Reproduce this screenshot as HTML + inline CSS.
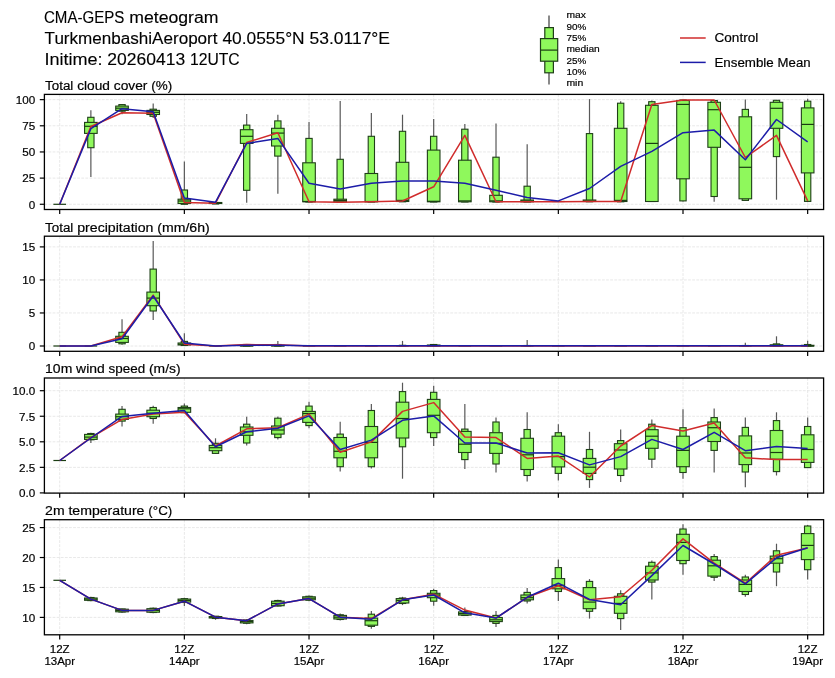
<!DOCTYPE html><html><head><meta charset="utf-8"><style>html,body{margin:0;padding:0;background:#fff;overflow:hidden}</style></head><body><svg width="835" height="678" viewBox="0 0 835 678" style="display:block;will-change:transform">
<rect width="835" height="678" fill="#fff"/>
<g font-family='"Liberation Sans", sans-serif' fill="#1a1a1a">
<text x="43.95" y="23.20" font-size="16" fill="#000" stroke="#000" stroke-width="0.12" textLength="80.45" lengthAdjust="spacingAndGlyphs">CMA-GEPS</text>
<text x="129.26" y="23.20" font-size="16" fill="#000" stroke="#000" stroke-width="0.12" textLength="89.26" lengthAdjust="spacingAndGlyphs">meteogram</text>
<text x="44.60" y="44.10" font-size="16" fill="#000" stroke="#000" stroke-width="0.12" textLength="172.95" lengthAdjust="spacingAndGlyphs">TurkmenbashiAeroport</text>
<text x="222.41" y="44.10" font-size="16" fill="#000" stroke="#000" stroke-width="0.12" textLength="82.26" lengthAdjust="spacingAndGlyphs">40.0555°N</text>
<text x="309.52" y="44.10" font-size="16" fill="#000" stroke="#000" stroke-width="0.12" textLength="80.48" lengthAdjust="spacingAndGlyphs">53.0117°E</text>
<text x="44.40" y="64.90" font-size="16" fill="#000" stroke="#000" stroke-width="0.12" textLength="58.11" lengthAdjust="spacingAndGlyphs">Initime:</text>
<text x="107.36" y="64.90" font-size="16" fill="#000" stroke="#000" stroke-width="0.12" textLength="77.77" lengthAdjust="spacingAndGlyphs">20260413</text>
<text x="189.99" y="64.90" font-size="16" fill="#000" stroke="#000" stroke-width="0.12" textLength="49.73" lengthAdjust="spacingAndGlyphs">12UTC</text>
<line x1="549" y1="15.6" x2="549" y2="84.6" stroke="#585858" stroke-width="1.4"/>
<rect x="544.8" y="27.6" width="8.6" height="45.2" fill="#8ff85c" stroke="#1f3f18" stroke-width="1.2"/>
<rect x="540.5" y="38.6" width="17.2" height="22.6" fill="#8ff85c" stroke="#1f3f18" stroke-width="1.2"/>
<line x1="540.5" y1="50.1" x2="557.7" y2="50.1" stroke="#1a3d12" stroke-width="1.2"/>
<text x="566.40" y="18.20" font-size="9.2" fill="#000" stroke="#000" stroke-width="0.18" textLength="19.41" lengthAdjust="spacingAndGlyphs">max</text>
<text x="566.40" y="29.55" font-size="9.2" fill="#000" stroke="#000" stroke-width="0.18" textLength="19.80" lengthAdjust="spacingAndGlyphs">90%</text>
<text x="566.40" y="40.90" font-size="9.2" fill="#000" stroke="#000" stroke-width="0.18" textLength="19.80" lengthAdjust="spacingAndGlyphs">75%</text>
<text x="566.40" y="52.25" font-size="9.2" fill="#000" stroke="#000" stroke-width="0.18" textLength="33.40" lengthAdjust="spacingAndGlyphs">median</text>
<text x="566.40" y="63.60" font-size="9.2" fill="#000" stroke="#000" stroke-width="0.18" textLength="19.80" lengthAdjust="spacingAndGlyphs">25%</text>
<text x="566.40" y="74.95" font-size="9.2" fill="#000" stroke="#000" stroke-width="0.18" textLength="19.80" lengthAdjust="spacingAndGlyphs">10%</text>
<text x="566.40" y="86.30" font-size="9.2" fill="#000" stroke="#000" stroke-width="0.18" textLength="16.80" lengthAdjust="spacingAndGlyphs">min</text>
<line x1="680" y1="38" x2="705.7" y2="38" stroke="#d02c2c" stroke-width="1.5"/>
<line x1="680" y1="62.4" x2="705.7" y2="62.4" stroke="#1c1ca8" stroke-width="1.5"/>
<text x="714.50" y="42.40" font-size="12.3" fill="#000" stroke="#000" stroke-width="0.18" textLength="43.74" lengthAdjust="spacingAndGlyphs">Control</text>
<text x="714.40" y="66.70" font-size="12.3" fill="#000" stroke="#000" stroke-width="0.18" textLength="59.34" lengthAdjust="spacingAndGlyphs">Ensemble</text>
<text x="777.58" y="66.70" font-size="12.3" fill="#000" stroke="#000" stroke-width="0.18" textLength="32.97" lengthAdjust="spacingAndGlyphs">Mean</text>
<line x1="44.4" y1="204.27" x2="823.6" y2="204.27" stroke="#e2e2e2" stroke-width="0.8" stroke-dasharray="2.8 1.3"/>
<line x1="44.4" y1="178.11" x2="823.6" y2="178.11" stroke="#e2e2e2" stroke-width="0.8" stroke-dasharray="2.8 1.3"/>
<line x1="44.4" y1="151.95" x2="823.6" y2="151.95" stroke="#e2e2e2" stroke-width="0.8" stroke-dasharray="2.8 1.3"/>
<line x1="44.4" y1="125.79" x2="823.6" y2="125.79" stroke="#e2e2e2" stroke-width="0.8" stroke-dasharray="2.8 1.3"/>
<line x1="44.4" y1="99.63" x2="823.6" y2="99.63" stroke="#e2e2e2" stroke-width="0.8" stroke-dasharray="2.8 1.3"/>
<line x1="59.70" y1="94.4" x2="59.70" y2="209.5" stroke="#e2e2e2" stroke-width="0.8" stroke-dasharray="2.8 1.3"/>
<line x1="184.36" y1="94.4" x2="184.36" y2="209.5" stroke="#e2e2e2" stroke-width="0.8" stroke-dasharray="2.8 1.3"/>
<line x1="309.02" y1="94.4" x2="309.02" y2="209.5" stroke="#e2e2e2" stroke-width="0.8" stroke-dasharray="2.8 1.3"/>
<line x1="433.68" y1="94.4" x2="433.68" y2="209.5" stroke="#e2e2e2" stroke-width="0.8" stroke-dasharray="2.8 1.3"/>
<line x1="558.34" y1="94.4" x2="558.34" y2="209.5" stroke="#e2e2e2" stroke-width="0.8" stroke-dasharray="2.8 1.3"/>
<line x1="683.00" y1="94.4" x2="683.00" y2="209.5" stroke="#e2e2e2" stroke-width="0.8" stroke-dasharray="2.8 1.3"/>
<line x1="807.66" y1="94.4" x2="807.66" y2="209.5" stroke="#e2e2e2" stroke-width="0.8" stroke-dasharray="2.8 1.3"/>
<line x1="59.70" y1="204.30" x2="59.70" y2="204.30" stroke="#585858" stroke-width="1.2"/>
<rect x="56.55" y="204.30" width="6.3" height="0.00" fill="#8ff85c" stroke="#1f3f18" stroke-width="1.1"/>
<rect x="53.40" y="204.30" width="12.6" height="0.00" fill="#8ff85c" stroke="#1f3f18" stroke-width="1.1"/>
<line x1="53.40" y1="204.30" x2="66.00" y2="204.30" stroke="#1a3d12" stroke-width="1.2"/>
<line x1="90.87" y1="110.20" x2="90.87" y2="177.00" stroke="#585858" stroke-width="1.2"/>
<rect x="87.72" y="117.30" width="6.3" height="30.40" fill="#8ff85c" stroke="#1f3f18" stroke-width="1.1"/>
<rect x="84.57" y="122.40" width="12.6" height="11.00" fill="#8ff85c" stroke="#1f3f18" stroke-width="1.1"/>
<line x1="84.57" y1="126.30" x2="97.17" y2="126.30" stroke="#1a3d12" stroke-width="1.2"/>
<line x1="122.03" y1="104.10" x2="122.03" y2="114.30" stroke="#585858" stroke-width="1.2"/>
<rect x="118.88" y="104.60" width="6.3" height="6.60" fill="#8ff85c" stroke="#1f3f18" stroke-width="1.1"/>
<rect x="115.73" y="106.10" width="12.6" height="4.30" fill="#8ff85c" stroke="#1f3f18" stroke-width="1.1"/>
<line x1="115.73" y1="108.20" x2="128.33" y2="108.20" stroke="#1a3d12" stroke-width="1.2"/>
<line x1="153.19" y1="103.60" x2="153.19" y2="117.90" stroke="#585858" stroke-width="1.2"/>
<rect x="150.04" y="109.20" width="6.3" height="7.10" fill="#8ff85c" stroke="#1f3f18" stroke-width="1.1"/>
<rect x="146.89" y="110.40" width="12.6" height="4.10" fill="#8ff85c" stroke="#1f3f18" stroke-width="1.1"/>
<line x1="146.89" y1="112.30" x2="159.50" y2="112.30" stroke="#1a3d12" stroke-width="1.2"/>
<line x1="184.36" y1="161.40" x2="184.36" y2="204.30" stroke="#585858" stroke-width="1.2"/>
<rect x="181.21" y="190.00" width="6.3" height="14.30" fill="#8ff85c" stroke="#1f3f18" stroke-width="1.1"/>
<rect x="178.06" y="199.20" width="12.6" height="4.30" fill="#8ff85c" stroke="#1f3f18" stroke-width="1.1"/>
<line x1="178.06" y1="201.00" x2="190.66" y2="201.00" stroke="#1a3d12" stroke-width="1.2"/>
<line x1="215.52" y1="202.00" x2="215.52" y2="204.00" stroke="#585858" stroke-width="1.2"/>
<rect x="212.37" y="202.50" width="6.3" height="1.50" fill="#8ff85c" stroke="#1f3f18" stroke-width="1.1"/>
<rect x="209.22" y="202.50" width="12.6" height="1.00" fill="#8ff85c" stroke="#1f3f18" stroke-width="1.1"/>
<line x1="209.22" y1="203.00" x2="221.82" y2="203.00" stroke="#1a3d12" stroke-width="1.2"/>
<line x1="246.69" y1="114.10" x2="246.69" y2="202.70" stroke="#585858" stroke-width="1.2"/>
<rect x="243.54" y="125.10" width="6.3" height="65.20" fill="#8ff85c" stroke="#1f3f18" stroke-width="1.1"/>
<rect x="240.39" y="129.70" width="12.6" height="13.70" fill="#8ff85c" stroke="#1f3f18" stroke-width="1.1"/>
<line x1="240.39" y1="136.30" x2="252.99" y2="136.30" stroke="#1a3d12" stroke-width="1.2"/>
<line x1="277.86" y1="114.70" x2="277.86" y2="193.80" stroke="#585858" stroke-width="1.2"/>
<rect x="274.71" y="120.90" width="6.3" height="35.20" fill="#8ff85c" stroke="#1f3f18" stroke-width="1.1"/>
<rect x="271.56" y="128.30" width="12.6" height="17.70" fill="#8ff85c" stroke="#1f3f18" stroke-width="1.1"/>
<line x1="271.56" y1="133.10" x2="284.16" y2="133.10" stroke="#1a3d12" stroke-width="1.2"/>
<line x1="309.02" y1="122.10" x2="309.02" y2="202.00" stroke="#585858" stroke-width="1.2"/>
<rect x="305.87" y="138.40" width="6.3" height="63.60" fill="#8ff85c" stroke="#1f3f18" stroke-width="1.1"/>
<rect x="302.72" y="162.80" width="12.6" height="39.00" fill="#8ff85c" stroke="#1f3f18" stroke-width="1.1"/>
<line x1="302.72" y1="201.50" x2="315.32" y2="201.50" stroke="#1a3d12" stroke-width="1.2"/>
<line x1="340.19" y1="100.90" x2="340.19" y2="202.20" stroke="#585858" stroke-width="1.2"/>
<rect x="337.04" y="159.30" width="6.3" height="42.70" fill="#8ff85c" stroke="#1f3f18" stroke-width="1.1"/>
<rect x="333.88" y="199.20" width="12.6" height="2.60" fill="#8ff85c" stroke="#1f3f18" stroke-width="1.1"/>
<line x1="333.88" y1="200.40" x2="346.49" y2="200.40" stroke="#1a3d12" stroke-width="1.2"/>
<line x1="371.35" y1="112.90" x2="371.35" y2="202.00" stroke="#585858" stroke-width="1.2"/>
<rect x="368.20" y="136.30" width="6.3" height="65.70" fill="#8ff85c" stroke="#1f3f18" stroke-width="1.1"/>
<rect x="365.05" y="173.50" width="12.6" height="28.30" fill="#8ff85c" stroke="#1f3f18" stroke-width="1.1"/>
<line x1="365.05" y1="201.50" x2="377.65" y2="201.50" stroke="#1a3d12" stroke-width="1.2"/>
<line x1="402.51" y1="114.70" x2="402.51" y2="201.80" stroke="#585858" stroke-width="1.2"/>
<rect x="399.37" y="131.30" width="6.3" height="70.50" fill="#8ff85c" stroke="#1f3f18" stroke-width="1.1"/>
<rect x="396.21" y="162.30" width="12.6" height="39.20" fill="#8ff85c" stroke="#1f3f18" stroke-width="1.1"/>
<line x1="396.21" y1="200.40" x2="408.81" y2="200.40" stroke="#1a3d12" stroke-width="1.2"/>
<line x1="433.68" y1="118.90" x2="433.68" y2="202.00" stroke="#585858" stroke-width="1.2"/>
<rect x="430.53" y="136.30" width="6.3" height="65.70" fill="#8ff85c" stroke="#1f3f18" stroke-width="1.1"/>
<rect x="427.38" y="150.10" width="12.6" height="51.70" fill="#8ff85c" stroke="#1f3f18" stroke-width="1.1"/>
<line x1="427.38" y1="201.30" x2="439.98" y2="201.30" stroke="#1a3d12" stroke-width="1.2"/>
<line x1="464.84" y1="123.90" x2="464.84" y2="202.00" stroke="#585858" stroke-width="1.2"/>
<rect x="461.69" y="129.20" width="6.3" height="72.80" fill="#8ff85c" stroke="#1f3f18" stroke-width="1.1"/>
<rect x="458.54" y="160.20" width="12.6" height="41.60" fill="#8ff85c" stroke="#1f3f18" stroke-width="1.1"/>
<line x1="458.54" y1="200.90" x2="471.14" y2="200.90" stroke="#1a3d12" stroke-width="1.2"/>
<line x1="496.01" y1="123.50" x2="496.01" y2="202.00" stroke="#585858" stroke-width="1.2"/>
<rect x="492.86" y="157.20" width="6.3" height="44.80" fill="#8ff85c" stroke="#1f3f18" stroke-width="1.1"/>
<rect x="489.71" y="195.30" width="12.6" height="6.50" fill="#8ff85c" stroke="#1f3f18" stroke-width="1.1"/>
<line x1="489.71" y1="200.90" x2="502.31" y2="200.90" stroke="#1a3d12" stroke-width="1.2"/>
<line x1="527.17" y1="144.20" x2="527.17" y2="202.00" stroke="#585858" stroke-width="1.2"/>
<rect x="524.02" y="186.20" width="6.3" height="15.80" fill="#8ff85c" stroke="#1f3f18" stroke-width="1.1"/>
<rect x="520.88" y="200.00" width="12.6" height="1.80" fill="#8ff85c" stroke="#1f3f18" stroke-width="1.1"/>
<line x1="520.88" y1="200.90" x2="533.47" y2="200.90" stroke="#1a3d12" stroke-width="1.2"/>
<line x1="558.34" y1="201.50" x2="558.34" y2="201.50" stroke="#585858" stroke-width="1.2"/>
<rect x="555.19" y="201.50" width="6.3" height="0.00" fill="#8ff85c" stroke="#1f3f18" stroke-width="1.1"/>
<rect x="552.04" y="201.50" width="12.6" height="0.00" fill="#8ff85c" stroke="#1f3f18" stroke-width="1.1"/>
<line x1="552.04" y1="201.50" x2="564.64" y2="201.50" stroke="#1a3d12" stroke-width="1.2"/>
<line x1="589.50" y1="99.10" x2="589.50" y2="201.80" stroke="#585858" stroke-width="1.2"/>
<rect x="586.36" y="133.60" width="6.3" height="68.20" fill="#8ff85c" stroke="#1f3f18" stroke-width="1.1"/>
<rect x="583.21" y="200.00" width="12.6" height="1.50" fill="#8ff85c" stroke="#1f3f18" stroke-width="1.1"/>
<line x1="583.21" y1="201.00" x2="595.80" y2="201.00" stroke="#1a3d12" stroke-width="1.2"/>
<line x1="620.67" y1="101.20" x2="620.67" y2="201.80" stroke="#585858" stroke-width="1.2"/>
<rect x="617.52" y="103.20" width="6.3" height="98.60" fill="#8ff85c" stroke="#1f3f18" stroke-width="1.1"/>
<rect x="614.37" y="128.30" width="12.6" height="73.20" fill="#8ff85c" stroke="#1f3f18" stroke-width="1.1"/>
<line x1="614.37" y1="200.40" x2="626.97" y2="200.40" stroke="#1a3d12" stroke-width="1.2"/>
<line x1="651.84" y1="100.50" x2="651.84" y2="201.50" stroke="#585858" stroke-width="1.2"/>
<rect x="648.69" y="101.70" width="6.3" height="99.80" fill="#8ff85c" stroke="#1f3f18" stroke-width="1.1"/>
<rect x="645.54" y="105.30" width="12.6" height="96.20" fill="#8ff85c" stroke="#1f3f18" stroke-width="1.1"/>
<line x1="645.54" y1="143.40" x2="658.13" y2="143.40" stroke="#1a3d12" stroke-width="1.2"/>
<line x1="683.00" y1="100.00" x2="683.00" y2="201.50" stroke="#585858" stroke-width="1.2"/>
<rect x="679.85" y="100.00" width="6.3" height="100.90" fill="#8ff85c" stroke="#1f3f18" stroke-width="1.1"/>
<rect x="676.70" y="100.50" width="12.6" height="78.30" fill="#8ff85c" stroke="#1f3f18" stroke-width="1.1"/>
<line x1="676.70" y1="104.40" x2="689.30" y2="104.40" stroke="#1a3d12" stroke-width="1.2"/>
<line x1="714.17" y1="100.00" x2="714.17" y2="201.80" stroke="#585858" stroke-width="1.2"/>
<rect x="711.02" y="100.50" width="6.3" height="96.00" fill="#8ff85c" stroke="#1f3f18" stroke-width="1.1"/>
<rect x="707.87" y="102.30" width="12.6" height="45.00" fill="#8ff85c" stroke="#1f3f18" stroke-width="1.1"/>
<line x1="707.87" y1="109.70" x2="720.47" y2="109.70" stroke="#1a3d12" stroke-width="1.2"/>
<line x1="745.33" y1="99.40" x2="745.33" y2="200.40" stroke="#585858" stroke-width="1.2"/>
<rect x="742.18" y="109.40" width="6.3" height="91.00" fill="#8ff85c" stroke="#1f3f18" stroke-width="1.1"/>
<rect x="739.03" y="116.80" width="12.6" height="82.00" fill="#8ff85c" stroke="#1f3f18" stroke-width="1.1"/>
<line x1="739.03" y1="167.30" x2="751.63" y2="167.30" stroke="#1a3d12" stroke-width="1.2"/>
<line x1="776.50" y1="100.00" x2="776.50" y2="199.70" stroke="#585858" stroke-width="1.2"/>
<rect x="773.35" y="100.30" width="6.3" height="56.30" fill="#8ff85c" stroke="#1f3f18" stroke-width="1.1"/>
<rect x="770.20" y="102.30" width="12.6" height="26.00" fill="#8ff85c" stroke="#1f3f18" stroke-width="1.1"/>
<line x1="770.20" y1="108.30" x2="782.79" y2="108.30" stroke="#1a3d12" stroke-width="1.2"/>
<line x1="807.66" y1="98.70" x2="807.66" y2="201.80" stroke="#585858" stroke-width="1.2"/>
<rect x="804.51" y="101.20" width="6.3" height="100.20" fill="#8ff85c" stroke="#1f3f18" stroke-width="1.1"/>
<rect x="801.36" y="107.90" width="12.6" height="65.00" fill="#8ff85c" stroke="#1f3f18" stroke-width="1.1"/>
<line x1="801.36" y1="124.40" x2="813.96" y2="124.40" stroke="#1a3d12" stroke-width="1.2"/>
<polyline points="59.70,204.30 90.87,126.50 122.03,112.80 153.19,113.30 184.36,202.50 215.52,203.20 246.69,142.50 277.86,132.70 309.02,201.80 340.19,202.20 371.35,201.80 402.51,201.00 433.68,186.80 464.84,135.40 496.01,201.80 527.17,201.80 558.34,201.80 589.50,201.50 620.67,201.50 651.84,104.40 683.00,100.00 714.17,100.00 745.33,157.50 776.50,135.40 807.66,200.90" fill="none" stroke="#d02c2c" stroke-width="1.5" stroke-linejoin="round"/>
<polyline points="59.70,204.30 90.87,128.60 122.03,108.70 153.19,111.70 184.36,198.00 215.52,202.20 246.69,143.40 277.86,138.40 309.02,183.20 340.19,189.10 371.35,183.20 402.51,181.10 433.68,181.10 464.84,183.20 496.01,190.30 527.17,197.40 558.34,200.90 589.50,188.50 620.67,166.40 651.84,151.30 683.00,132.70 714.17,130.10 745.33,159.70 776.50,119.50 807.66,141.90" fill="none" stroke="#1c1ca8" stroke-width="1.5" stroke-linejoin="round"/>
<rect x="44.4" y="94.4" width="779.20" height="115.1" fill="none" stroke="#000" stroke-width="1.3"/>
<line x1="39.80" y1="204.27" x2="44.4" y2="204.27" stroke="#000" stroke-width="1.2"/>
<text x="28.82" y="208.57" font-size="10.67" fill="#000" stroke="#000" stroke-width="0.18" textLength="6.48" lengthAdjust="spacingAndGlyphs">0</text>
<line x1="39.80" y1="178.11" x2="44.4" y2="178.11" stroke="#000" stroke-width="1.2"/>
<text x="22.33" y="182.41" font-size="10.67" fill="#000" stroke="#000" stroke-width="0.18" textLength="12.97" lengthAdjust="spacingAndGlyphs">25</text>
<line x1="39.80" y1="151.95" x2="44.4" y2="151.95" stroke="#000" stroke-width="1.2"/>
<text x="22.33" y="156.25" font-size="10.67" fill="#000" stroke="#000" stroke-width="0.18" textLength="12.97" lengthAdjust="spacingAndGlyphs">50</text>
<line x1="39.80" y1="125.79" x2="44.4" y2="125.79" stroke="#000" stroke-width="1.2"/>
<text x="22.33" y="130.09" font-size="10.67" fill="#000" stroke="#000" stroke-width="0.18" textLength="12.97" lengthAdjust="spacingAndGlyphs">75</text>
<line x1="39.80" y1="99.63" x2="44.4" y2="99.63" stroke="#000" stroke-width="1.2"/>
<text x="15.85" y="103.93" font-size="10.67" fill="#000" stroke="#000" stroke-width="0.18" textLength="19.45" lengthAdjust="spacingAndGlyphs">100</text>
<line x1="59.70" y1="209.5" x2="59.70" y2="214.10" stroke="#000" stroke-width="1.2"/>
<line x1="184.36" y1="209.5" x2="184.36" y2="214.10" stroke="#000" stroke-width="1.2"/>
<line x1="309.02" y1="209.5" x2="309.02" y2="214.10" stroke="#000" stroke-width="1.2"/>
<line x1="433.68" y1="209.5" x2="433.68" y2="214.10" stroke="#000" stroke-width="1.2"/>
<line x1="558.34" y1="209.5" x2="558.34" y2="214.10" stroke="#000" stroke-width="1.2"/>
<line x1="683.00" y1="209.5" x2="683.00" y2="214.10" stroke="#000" stroke-width="1.2"/>
<line x1="807.66" y1="209.5" x2="807.66" y2="214.10" stroke="#000" stroke-width="1.2"/>
<text x="45.10" y="89.80" font-size="12.3" fill="#000" stroke="#000" stroke-width="0.18" textLength="28.26" lengthAdjust="spacingAndGlyphs">Total</text>
<text x="77.21" y="89.80" font-size="12.3" fill="#000" stroke="#000" stroke-width="0.18" textLength="32.77" lengthAdjust="spacingAndGlyphs">cloud</text>
<text x="113.82" y="89.80" font-size="12.3" fill="#000" stroke="#000" stroke-width="0.18" textLength="33.64" lengthAdjust="spacingAndGlyphs">cover</text>
<text x="151.30" y="89.80" font-size="12.3" fill="#000" stroke="#000" stroke-width="0.18" textLength="20.94" lengthAdjust="spacingAndGlyphs">(%)</text>
<line x1="44.4" y1="346.00" x2="823.6" y2="346.00" stroke="#e2e2e2" stroke-width="0.8" stroke-dasharray="2.8 1.3"/>
<line x1="44.4" y1="312.96" x2="823.6" y2="312.96" stroke="#e2e2e2" stroke-width="0.8" stroke-dasharray="2.8 1.3"/>
<line x1="44.4" y1="279.93" x2="823.6" y2="279.93" stroke="#e2e2e2" stroke-width="0.8" stroke-dasharray="2.8 1.3"/>
<line x1="44.4" y1="246.89" x2="823.6" y2="246.89" stroke="#e2e2e2" stroke-width="0.8" stroke-dasharray="2.8 1.3"/>
<line x1="59.70" y1="236.2" x2="59.70" y2="351.29999999999995" stroke="#e2e2e2" stroke-width="0.8" stroke-dasharray="2.8 1.3"/>
<line x1="184.36" y1="236.2" x2="184.36" y2="351.29999999999995" stroke="#e2e2e2" stroke-width="0.8" stroke-dasharray="2.8 1.3"/>
<line x1="309.02" y1="236.2" x2="309.02" y2="351.29999999999995" stroke="#e2e2e2" stroke-width="0.8" stroke-dasharray="2.8 1.3"/>
<line x1="433.68" y1="236.2" x2="433.68" y2="351.29999999999995" stroke="#e2e2e2" stroke-width="0.8" stroke-dasharray="2.8 1.3"/>
<line x1="558.34" y1="236.2" x2="558.34" y2="351.29999999999995" stroke="#e2e2e2" stroke-width="0.8" stroke-dasharray="2.8 1.3"/>
<line x1="683.00" y1="236.2" x2="683.00" y2="351.29999999999995" stroke="#e2e2e2" stroke-width="0.8" stroke-dasharray="2.8 1.3"/>
<line x1="807.66" y1="236.2" x2="807.66" y2="351.29999999999995" stroke="#e2e2e2" stroke-width="0.8" stroke-dasharray="2.8 1.3"/>
<line x1="59.70" y1="346.00" x2="59.70" y2="346.00" stroke="#585858" stroke-width="1.2"/>
<rect x="56.55" y="346.00" width="6.3" height="0.00" fill="#8ff85c" stroke="#1f3f18" stroke-width="1.1"/>
<rect x="53.40" y="346.00" width="12.6" height="0.00" fill="#8ff85c" stroke="#1f3f18" stroke-width="1.1"/>
<line x1="53.40" y1="346.00" x2="66.00" y2="346.00" stroke="#1a3d12" stroke-width="1.2"/>
<line x1="90.87" y1="346.00" x2="90.87" y2="346.00" stroke="#585858" stroke-width="1.2"/>
<rect x="87.72" y="346.00" width="6.3" height="0.00" fill="#8ff85c" stroke="#1f3f18" stroke-width="1.1"/>
<rect x="84.57" y="346.00" width="12.6" height="0.00" fill="#8ff85c" stroke="#1f3f18" stroke-width="1.1"/>
<line x1="84.57" y1="346.00" x2="97.17" y2="346.00" stroke="#1a3d12" stroke-width="1.2"/>
<line x1="122.03" y1="319.30" x2="122.03" y2="344.70" stroke="#585858" stroke-width="1.2"/>
<rect x="118.88" y="332.30" width="6.3" height="11.50" fill="#8ff85c" stroke="#1f3f18" stroke-width="1.1"/>
<rect x="115.73" y="336.30" width="12.6" height="6.10" fill="#8ff85c" stroke="#1f3f18" stroke-width="1.1"/>
<line x1="115.73" y1="338.50" x2="128.33" y2="338.50" stroke="#1a3d12" stroke-width="1.2"/>
<line x1="153.19" y1="241.10" x2="153.19" y2="319.90" stroke="#585858" stroke-width="1.2"/>
<rect x="150.04" y="269.10" width="6.3" height="41.90" fill="#8ff85c" stroke="#1f3f18" stroke-width="1.1"/>
<rect x="146.89" y="292.10" width="12.6" height="13.60" fill="#8ff85c" stroke="#1f3f18" stroke-width="1.1"/>
<line x1="146.89" y1="298.10" x2="159.50" y2="298.10" stroke="#1a3d12" stroke-width="1.2"/>
<line x1="184.36" y1="333.30" x2="184.36" y2="345.50" stroke="#585858" stroke-width="1.2"/>
<rect x="181.21" y="341.40" width="6.3" height="4.10" fill="#8ff85c" stroke="#1f3f18" stroke-width="1.1"/>
<rect x="178.06" y="343.00" width="12.6" height="2.00" fill="#8ff85c" stroke="#1f3f18" stroke-width="1.1"/>
<line x1="178.06" y1="344.20" x2="190.66" y2="344.20" stroke="#1a3d12" stroke-width="1.2"/>
<line x1="215.52" y1="346.00" x2="215.52" y2="346.00" stroke="#585858" stroke-width="1.2"/>
<rect x="212.37" y="346.00" width="6.3" height="0.00" fill="#8ff85c" stroke="#1f3f18" stroke-width="1.1"/>
<rect x="209.22" y="346.00" width="12.6" height="0.00" fill="#8ff85c" stroke="#1f3f18" stroke-width="1.1"/>
<line x1="209.22" y1="346.00" x2="221.82" y2="346.00" stroke="#1a3d12" stroke-width="1.2"/>
<line x1="246.69" y1="344.00" x2="246.69" y2="346.00" stroke="#585858" stroke-width="1.2"/>
<rect x="243.54" y="344.50" width="6.3" height="1.50" fill="#8ff85c" stroke="#1f3f18" stroke-width="1.1"/>
<rect x="240.39" y="345.00" width="12.6" height="1.00" fill="#8ff85c" stroke="#1f3f18" stroke-width="1.1"/>
<line x1="240.39" y1="345.80" x2="252.99" y2="345.80" stroke="#1a3d12" stroke-width="1.2"/>
<line x1="277.86" y1="341.00" x2="277.86" y2="346.00" stroke="#585858" stroke-width="1.2"/>
<rect x="274.71" y="344.50" width="6.3" height="1.50" fill="#8ff85c" stroke="#1f3f18" stroke-width="1.1"/>
<rect x="271.56" y="345.30" width="12.6" height="0.70" fill="#8ff85c" stroke="#1f3f18" stroke-width="1.1"/>
<line x1="271.56" y1="345.70" x2="284.16" y2="345.70" stroke="#1a3d12" stroke-width="1.2"/>
<line x1="309.02" y1="346.00" x2="309.02" y2="346.00" stroke="#585858" stroke-width="1.2"/>
<rect x="305.87" y="346.00" width="6.3" height="0.00" fill="#8ff85c" stroke="#1f3f18" stroke-width="1.1"/>
<rect x="302.72" y="346.00" width="12.6" height="0.00" fill="#8ff85c" stroke="#1f3f18" stroke-width="1.1"/>
<line x1="302.72" y1="346.00" x2="315.32" y2="346.00" stroke="#1a3d12" stroke-width="1.2"/>
<line x1="340.19" y1="346.00" x2="340.19" y2="346.00" stroke="#585858" stroke-width="1.2"/>
<rect x="337.04" y="346.00" width="6.3" height="0.00" fill="#8ff85c" stroke="#1f3f18" stroke-width="1.1"/>
<rect x="333.88" y="346.00" width="12.6" height="0.00" fill="#8ff85c" stroke="#1f3f18" stroke-width="1.1"/>
<line x1="333.88" y1="346.00" x2="346.49" y2="346.00" stroke="#1a3d12" stroke-width="1.2"/>
<line x1="371.35" y1="346.00" x2="371.35" y2="346.00" stroke="#585858" stroke-width="1.2"/>
<rect x="368.20" y="346.00" width="6.3" height="0.00" fill="#8ff85c" stroke="#1f3f18" stroke-width="1.1"/>
<rect x="365.05" y="346.00" width="12.6" height="0.00" fill="#8ff85c" stroke="#1f3f18" stroke-width="1.1"/>
<line x1="365.05" y1="346.00" x2="377.65" y2="346.00" stroke="#1a3d12" stroke-width="1.2"/>
<line x1="402.51" y1="340.90" x2="402.51" y2="346.00" stroke="#585858" stroke-width="1.2"/>
<rect x="399.37" y="345.30" width="6.3" height="0.70" fill="#8ff85c" stroke="#1f3f18" stroke-width="1.1"/>
<rect x="396.21" y="346.00" width="12.6" height="0.00" fill="#8ff85c" stroke="#1f3f18" stroke-width="1.1"/>
<line x1="396.21" y1="346.00" x2="408.81" y2="346.00" stroke="#1a3d12" stroke-width="1.2"/>
<line x1="433.68" y1="344.00" x2="433.68" y2="346.00" stroke="#585858" stroke-width="1.2"/>
<rect x="430.53" y="344.50" width="6.3" height="1.50" fill="#8ff85c" stroke="#1f3f18" stroke-width="1.1"/>
<rect x="427.38" y="345.00" width="12.6" height="1.00" fill="#8ff85c" stroke="#1f3f18" stroke-width="1.1"/>
<line x1="427.38" y1="345.70" x2="439.98" y2="345.70" stroke="#1a3d12" stroke-width="1.2"/>
<line x1="464.84" y1="346.00" x2="464.84" y2="346.00" stroke="#585858" stroke-width="1.2"/>
<rect x="461.69" y="346.00" width="6.3" height="0.00" fill="#8ff85c" stroke="#1f3f18" stroke-width="1.1"/>
<rect x="458.54" y="346.00" width="12.6" height="0.00" fill="#8ff85c" stroke="#1f3f18" stroke-width="1.1"/>
<line x1="458.54" y1="346.00" x2="471.14" y2="346.00" stroke="#1a3d12" stroke-width="1.2"/>
<line x1="496.01" y1="346.00" x2="496.01" y2="346.00" stroke="#585858" stroke-width="1.2"/>
<rect x="492.86" y="346.00" width="6.3" height="0.00" fill="#8ff85c" stroke="#1f3f18" stroke-width="1.1"/>
<rect x="489.71" y="346.00" width="12.6" height="0.00" fill="#8ff85c" stroke="#1f3f18" stroke-width="1.1"/>
<line x1="489.71" y1="346.00" x2="502.31" y2="346.00" stroke="#1a3d12" stroke-width="1.2"/>
<line x1="527.17" y1="339.90" x2="527.17" y2="346.00" stroke="#585858" stroke-width="1.2"/>
<rect x="524.02" y="345.50" width="6.3" height="0.50" fill="#8ff85c" stroke="#1f3f18" stroke-width="1.1"/>
<rect x="520.88" y="346.00" width="12.6" height="0.00" fill="#8ff85c" stroke="#1f3f18" stroke-width="1.1"/>
<line x1="520.88" y1="346.00" x2="533.47" y2="346.00" stroke="#1a3d12" stroke-width="1.2"/>
<line x1="558.34" y1="346.00" x2="558.34" y2="346.00" stroke="#585858" stroke-width="1.2"/>
<rect x="555.19" y="346.00" width="6.3" height="0.00" fill="#8ff85c" stroke="#1f3f18" stroke-width="1.1"/>
<rect x="552.04" y="346.00" width="12.6" height="0.00" fill="#8ff85c" stroke="#1f3f18" stroke-width="1.1"/>
<line x1="552.04" y1="346.00" x2="564.64" y2="346.00" stroke="#1a3d12" stroke-width="1.2"/>
<line x1="589.50" y1="346.00" x2="589.50" y2="346.00" stroke="#585858" stroke-width="1.2"/>
<rect x="586.36" y="346.00" width="6.3" height="0.00" fill="#8ff85c" stroke="#1f3f18" stroke-width="1.1"/>
<rect x="583.21" y="346.00" width="12.6" height="0.00" fill="#8ff85c" stroke="#1f3f18" stroke-width="1.1"/>
<line x1="583.21" y1="346.00" x2="595.80" y2="346.00" stroke="#1a3d12" stroke-width="1.2"/>
<line x1="620.67" y1="346.00" x2="620.67" y2="346.00" stroke="#585858" stroke-width="1.2"/>
<rect x="617.52" y="346.00" width="6.3" height="0.00" fill="#8ff85c" stroke="#1f3f18" stroke-width="1.1"/>
<rect x="614.37" y="346.00" width="12.6" height="0.00" fill="#8ff85c" stroke="#1f3f18" stroke-width="1.1"/>
<line x1="614.37" y1="346.00" x2="626.97" y2="346.00" stroke="#1a3d12" stroke-width="1.2"/>
<line x1="651.84" y1="346.00" x2="651.84" y2="346.00" stroke="#585858" stroke-width="1.2"/>
<rect x="648.69" y="346.00" width="6.3" height="0.00" fill="#8ff85c" stroke="#1f3f18" stroke-width="1.1"/>
<rect x="645.54" y="346.00" width="12.6" height="0.00" fill="#8ff85c" stroke="#1f3f18" stroke-width="1.1"/>
<line x1="645.54" y1="346.00" x2="658.13" y2="346.00" stroke="#1a3d12" stroke-width="1.2"/>
<line x1="683.00" y1="346.00" x2="683.00" y2="346.00" stroke="#585858" stroke-width="1.2"/>
<rect x="679.85" y="346.00" width="6.3" height="0.00" fill="#8ff85c" stroke="#1f3f18" stroke-width="1.1"/>
<rect x="676.70" y="346.00" width="12.6" height="0.00" fill="#8ff85c" stroke="#1f3f18" stroke-width="1.1"/>
<line x1="676.70" y1="346.00" x2="689.30" y2="346.00" stroke="#1a3d12" stroke-width="1.2"/>
<line x1="714.17" y1="346.00" x2="714.17" y2="346.00" stroke="#585858" stroke-width="1.2"/>
<rect x="711.02" y="346.00" width="6.3" height="0.00" fill="#8ff85c" stroke="#1f3f18" stroke-width="1.1"/>
<rect x="707.87" y="346.00" width="12.6" height="0.00" fill="#8ff85c" stroke="#1f3f18" stroke-width="1.1"/>
<line x1="707.87" y1="346.00" x2="720.47" y2="346.00" stroke="#1a3d12" stroke-width="1.2"/>
<line x1="745.33" y1="342.80" x2="745.33" y2="346.00" stroke="#585858" stroke-width="1.2"/>
<rect x="742.18" y="345.50" width="6.3" height="0.50" fill="#8ff85c" stroke="#1f3f18" stroke-width="1.1"/>
<rect x="739.03" y="346.00" width="12.6" height="0.00" fill="#8ff85c" stroke="#1f3f18" stroke-width="1.1"/>
<line x1="739.03" y1="346.00" x2="751.63" y2="346.00" stroke="#1a3d12" stroke-width="1.2"/>
<line x1="776.50" y1="336.30" x2="776.50" y2="346.00" stroke="#585858" stroke-width="1.2"/>
<rect x="773.35" y="343.90" width="6.3" height="2.10" fill="#8ff85c" stroke="#1f3f18" stroke-width="1.1"/>
<rect x="770.20" y="344.80" width="12.6" height="1.20" fill="#8ff85c" stroke="#1f3f18" stroke-width="1.1"/>
<line x1="770.20" y1="345.50" x2="782.79" y2="345.50" stroke="#1a3d12" stroke-width="1.2"/>
<line x1="807.66" y1="340.70" x2="807.66" y2="346.00" stroke="#585858" stroke-width="1.2"/>
<rect x="804.51" y="344.50" width="6.3" height="1.50" fill="#8ff85c" stroke="#1f3f18" stroke-width="1.1"/>
<rect x="801.36" y="345.30" width="12.6" height="0.70" fill="#8ff85c" stroke="#1f3f18" stroke-width="1.1"/>
<line x1="801.36" y1="346.00" x2="813.96" y2="346.00" stroke="#1a3d12" stroke-width="1.2"/>
<polyline points="59.70,346.00 90.87,346.00 122.03,336.70 153.19,295.10 184.36,344.20 215.52,346.00 246.69,344.60 277.86,344.80 309.02,346.00 340.19,346.00 371.35,346.00 402.51,346.00 433.68,346.00 464.84,346.00 496.01,346.00 527.17,346.00 558.34,346.00 589.50,346.00 620.67,346.00 651.84,346.00 683.00,346.00 714.17,346.00 745.33,346.00 776.50,346.00 807.66,346.00" fill="none" stroke="#d02c2c" stroke-width="1.5" stroke-linejoin="round"/>
<polyline points="59.70,346.00 90.87,346.00 122.03,338.80 153.19,296.00 184.36,343.00 215.52,346.00 246.69,345.20 277.86,345.30 309.02,345.80 340.19,345.80 371.35,345.80 402.51,345.80 433.68,345.80 464.84,345.80 496.01,345.80 527.17,345.80 558.34,345.80 589.50,345.80 620.67,345.80 651.84,345.80 683.00,345.80 714.17,345.80 745.33,345.80 776.50,345.80 807.66,345.80" fill="none" stroke="#1c1ca8" stroke-width="1.5" stroke-linejoin="round"/>
<rect x="44.4" y="236.2" width="779.20" height="115.1" fill="none" stroke="#000" stroke-width="1.3"/>
<line x1="39.80" y1="346.00" x2="44.4" y2="346.00" stroke="#000" stroke-width="1.2"/>
<text x="28.82" y="350.30" font-size="10.67" fill="#000" stroke="#000" stroke-width="0.18" textLength="6.48" lengthAdjust="spacingAndGlyphs">0</text>
<line x1="39.80" y1="312.96" x2="44.4" y2="312.96" stroke="#000" stroke-width="1.2"/>
<text x="28.82" y="317.26" font-size="10.67" fill="#000" stroke="#000" stroke-width="0.18" textLength="6.48" lengthAdjust="spacingAndGlyphs">5</text>
<line x1="39.80" y1="279.93" x2="44.4" y2="279.93" stroke="#000" stroke-width="1.2"/>
<text x="22.33" y="284.23" font-size="10.67" fill="#000" stroke="#000" stroke-width="0.18" textLength="12.97" lengthAdjust="spacingAndGlyphs">10</text>
<line x1="39.80" y1="246.89" x2="44.4" y2="246.89" stroke="#000" stroke-width="1.2"/>
<text x="22.33" y="251.19" font-size="10.67" fill="#000" stroke="#000" stroke-width="0.18" textLength="12.97" lengthAdjust="spacingAndGlyphs">15</text>
<line x1="59.70" y1="351.29999999999995" x2="59.70" y2="355.90" stroke="#000" stroke-width="1.2"/>
<line x1="184.36" y1="351.29999999999995" x2="184.36" y2="355.90" stroke="#000" stroke-width="1.2"/>
<line x1="309.02" y1="351.29999999999995" x2="309.02" y2="355.90" stroke="#000" stroke-width="1.2"/>
<line x1="433.68" y1="351.29999999999995" x2="433.68" y2="355.90" stroke="#000" stroke-width="1.2"/>
<line x1="558.34" y1="351.29999999999995" x2="558.34" y2="355.90" stroke="#000" stroke-width="1.2"/>
<line x1="683.00" y1="351.29999999999995" x2="683.00" y2="355.90" stroke="#000" stroke-width="1.2"/>
<line x1="807.66" y1="351.29999999999995" x2="807.66" y2="355.90" stroke="#000" stroke-width="1.2"/>
<text x="45.10" y="231.60" font-size="12.3" fill="#000" stroke="#000" stroke-width="0.18" textLength="28.26" lengthAdjust="spacingAndGlyphs">Total</text>
<text x="77.21" y="231.60" font-size="12.3" fill="#000" stroke="#000" stroke-width="0.18" textLength="76.23" lengthAdjust="spacingAndGlyphs">precipitation</text>
<text x="157.28" y="231.60" font-size="12.3" fill="#000" stroke="#000" stroke-width="0.18" textLength="52.46" lengthAdjust="spacingAndGlyphs">(mm/6h)</text>
<line x1="44.4" y1="492.90" x2="823.6" y2="492.90" stroke="#e2e2e2" stroke-width="0.8" stroke-dasharray="2.8 1.3"/>
<line x1="44.4" y1="467.35" x2="823.6" y2="467.35" stroke="#e2e2e2" stroke-width="0.8" stroke-dasharray="2.8 1.3"/>
<line x1="44.4" y1="441.80" x2="823.6" y2="441.80" stroke="#e2e2e2" stroke-width="0.8" stroke-dasharray="2.8 1.3"/>
<line x1="44.4" y1="416.25" x2="823.6" y2="416.25" stroke="#e2e2e2" stroke-width="0.8" stroke-dasharray="2.8 1.3"/>
<line x1="44.4" y1="390.70" x2="823.6" y2="390.70" stroke="#e2e2e2" stroke-width="0.8" stroke-dasharray="2.8 1.3"/>
<line x1="59.70" y1="378.0" x2="59.70" y2="493.1" stroke="#e2e2e2" stroke-width="0.8" stroke-dasharray="2.8 1.3"/>
<line x1="184.36" y1="378.0" x2="184.36" y2="493.1" stroke="#e2e2e2" stroke-width="0.8" stroke-dasharray="2.8 1.3"/>
<line x1="309.02" y1="378.0" x2="309.02" y2="493.1" stroke="#e2e2e2" stroke-width="0.8" stroke-dasharray="2.8 1.3"/>
<line x1="433.68" y1="378.0" x2="433.68" y2="493.1" stroke="#e2e2e2" stroke-width="0.8" stroke-dasharray="2.8 1.3"/>
<line x1="558.34" y1="378.0" x2="558.34" y2="493.1" stroke="#e2e2e2" stroke-width="0.8" stroke-dasharray="2.8 1.3"/>
<line x1="683.00" y1="378.0" x2="683.00" y2="493.1" stroke="#e2e2e2" stroke-width="0.8" stroke-dasharray="2.8 1.3"/>
<line x1="807.66" y1="378.0" x2="807.66" y2="493.1" stroke="#e2e2e2" stroke-width="0.8" stroke-dasharray="2.8 1.3"/>
<line x1="59.70" y1="460.50" x2="59.70" y2="460.50" stroke="#585858" stroke-width="1.2"/>
<rect x="56.55" y="460.50" width="6.3" height="0.00" fill="#8ff85c" stroke="#1f3f18" stroke-width="1.1"/>
<rect x="53.40" y="460.50" width="12.6" height="0.00" fill="#8ff85c" stroke="#1f3f18" stroke-width="1.1"/>
<line x1="53.40" y1="460.50" x2="66.00" y2="460.50" stroke="#1a3d12" stroke-width="1.2"/>
<line x1="90.87" y1="432.70" x2="90.87" y2="442.90" stroke="#585858" stroke-width="1.2"/>
<rect x="87.72" y="433.50" width="6.3" height="6.30" fill="#8ff85c" stroke="#1f3f18" stroke-width="1.1"/>
<rect x="84.57" y="434.40" width="12.6" height="5.00" fill="#8ff85c" stroke="#1f3f18" stroke-width="1.1"/>
<line x1="84.57" y1="437.10" x2="97.17" y2="437.10" stroke="#1a3d12" stroke-width="1.2"/>
<line x1="122.03" y1="406.10" x2="122.03" y2="426.50" stroke="#585858" stroke-width="1.2"/>
<rect x="118.88" y="409.30" width="6.3" height="11.80" fill="#8ff85c" stroke="#1f3f18" stroke-width="1.1"/>
<rect x="115.73" y="414.10" width="12.6" height="5.30" fill="#8ff85c" stroke="#1f3f18" stroke-width="1.1"/>
<line x1="115.73" y1="416.70" x2="128.33" y2="416.70" stroke="#1a3d12" stroke-width="1.2"/>
<line x1="153.19" y1="405.70" x2="153.19" y2="423.80" stroke="#585858" stroke-width="1.2"/>
<rect x="150.04" y="407.50" width="6.3" height="11.00" fill="#8ff85c" stroke="#1f3f18" stroke-width="1.1"/>
<rect x="146.89" y="410.20" width="12.6" height="6.50" fill="#8ff85c" stroke="#1f3f18" stroke-width="1.1"/>
<line x1="146.89" y1="413.20" x2="159.50" y2="413.20" stroke="#1a3d12" stroke-width="1.2"/>
<line x1="184.36" y1="403.50" x2="184.36" y2="413.20" stroke="#585858" stroke-width="1.2"/>
<rect x="181.21" y="406.10" width="6.3" height="6.50" fill="#8ff85c" stroke="#1f3f18" stroke-width="1.1"/>
<rect x="178.06" y="407.50" width="12.6" height="4.80" fill="#8ff85c" stroke="#1f3f18" stroke-width="1.1"/>
<line x1="178.06" y1="408.80" x2="190.66" y2="408.80" stroke="#1a3d12" stroke-width="1.2"/>
<line x1="215.52" y1="438.30" x2="215.52" y2="453.90" stroke="#585858" stroke-width="1.2"/>
<rect x="212.37" y="443.30" width="6.3" height="10.10" fill="#8ff85c" stroke="#1f3f18" stroke-width="1.1"/>
<rect x="209.22" y="445.40" width="12.6" height="5.30" fill="#8ff85c" stroke="#1f3f18" stroke-width="1.1"/>
<line x1="209.22" y1="447.70" x2="221.82" y2="447.70" stroke="#1a3d12" stroke-width="1.2"/>
<line x1="246.69" y1="416.70" x2="246.69" y2="445.60" stroke="#585858" stroke-width="1.2"/>
<rect x="243.54" y="424.20" width="6.3" height="18.80" fill="#8ff85c" stroke="#1f3f18" stroke-width="1.1"/>
<rect x="240.39" y="427.00" width="12.6" height="8.30" fill="#8ff85c" stroke="#1f3f18" stroke-width="1.1"/>
<line x1="240.39" y1="431.80" x2="252.99" y2="431.80" stroke="#1a3d12" stroke-width="1.2"/>
<line x1="277.86" y1="416.40" x2="277.86" y2="439.40" stroke="#585858" stroke-width="1.2"/>
<rect x="274.71" y="418.20" width="6.3" height="19.40" fill="#8ff85c" stroke="#1f3f18" stroke-width="1.1"/>
<rect x="271.56" y="426.00" width="12.6" height="8.10" fill="#8ff85c" stroke="#1f3f18" stroke-width="1.1"/>
<line x1="271.56" y1="430.00" x2="284.16" y2="430.00" stroke="#1a3d12" stroke-width="1.2"/>
<line x1="309.02" y1="401.70" x2="309.02" y2="428.20" stroke="#585858" stroke-width="1.2"/>
<rect x="305.87" y="406.10" width="6.3" height="19.50" fill="#8ff85c" stroke="#1f3f18" stroke-width="1.1"/>
<rect x="302.72" y="411.40" width="12.6" height="11.00" fill="#8ff85c" stroke="#1f3f18" stroke-width="1.1"/>
<line x1="302.72" y1="413.50" x2="315.32" y2="413.50" stroke="#1a3d12" stroke-width="1.2"/>
<line x1="340.19" y1="421.70" x2="340.19" y2="471.60" stroke="#585858" stroke-width="1.2"/>
<rect x="337.04" y="434.10" width="6.3" height="32.60" fill="#8ff85c" stroke="#1f3f18" stroke-width="1.1"/>
<rect x="333.88" y="437.50" width="12.6" height="20.30" fill="#8ff85c" stroke="#1f3f18" stroke-width="1.1"/>
<line x1="333.88" y1="451.30" x2="346.49" y2="451.30" stroke="#1a3d12" stroke-width="1.2"/>
<line x1="371.35" y1="404.00" x2="371.35" y2="468.50" stroke="#585858" stroke-width="1.2"/>
<rect x="368.20" y="410.50" width="6.3" height="56.20" fill="#8ff85c" stroke="#1f3f18" stroke-width="1.1"/>
<rect x="365.05" y="426.50" width="12.6" height="31.30" fill="#8ff85c" stroke="#1f3f18" stroke-width="1.1"/>
<line x1="365.05" y1="442.40" x2="377.65" y2="442.40" stroke="#1a3d12" stroke-width="1.2"/>
<line x1="402.51" y1="382.70" x2="402.51" y2="478.70" stroke="#585858" stroke-width="1.2"/>
<rect x="399.37" y="391.60" width="6.3" height="55.20" fill="#8ff85c" stroke="#1f3f18" stroke-width="1.1"/>
<rect x="396.21" y="402.20" width="12.6" height="35.80" fill="#8ff85c" stroke="#1f3f18" stroke-width="1.1"/>
<line x1="396.21" y1="418.50" x2="408.81" y2="418.50" stroke="#1a3d12" stroke-width="1.2"/>
<line x1="433.68" y1="385.70" x2="433.68" y2="446.00" stroke="#585858" stroke-width="1.2"/>
<rect x="430.53" y="392.30" width="6.3" height="45.30" fill="#8ff85c" stroke="#1f3f18" stroke-width="1.1"/>
<rect x="427.38" y="399.40" width="12.6" height="33.30" fill="#8ff85c" stroke="#1f3f18" stroke-width="1.1"/>
<line x1="427.38" y1="415.30" x2="439.98" y2="415.30" stroke="#1a3d12" stroke-width="1.2"/>
<line x1="464.84" y1="404.00" x2="464.84" y2="469.00" stroke="#585858" stroke-width="1.2"/>
<rect x="461.69" y="429.10" width="6.3" height="30.50" fill="#8ff85c" stroke="#1f3f18" stroke-width="1.1"/>
<rect x="458.54" y="431.40" width="12.6" height="21.10" fill="#8ff85c" stroke="#1f3f18" stroke-width="1.1"/>
<line x1="458.54" y1="444.20" x2="471.14" y2="444.20" stroke="#1a3d12" stroke-width="1.2"/>
<line x1="496.01" y1="417.60" x2="496.01" y2="472.50" stroke="#585858" stroke-width="1.2"/>
<rect x="492.86" y="422.00" width="6.3" height="42.00" fill="#8ff85c" stroke="#1f3f18" stroke-width="1.1"/>
<rect x="489.71" y="432.70" width="12.6" height="20.70" fill="#8ff85c" stroke="#1f3f18" stroke-width="1.1"/>
<line x1="489.71" y1="443.30" x2="502.31" y2="443.30" stroke="#1a3d12" stroke-width="1.2"/>
<line x1="527.17" y1="412.30" x2="527.17" y2="481.40" stroke="#585858" stroke-width="1.2"/>
<rect x="524.02" y="429.50" width="6.3" height="46.00" fill="#8ff85c" stroke="#1f3f18" stroke-width="1.1"/>
<rect x="520.88" y="438.30" width="12.6" height="31.20" fill="#8ff85c" stroke="#1f3f18" stroke-width="1.1"/>
<line x1="520.88" y1="454.80" x2="533.47" y2="454.80" stroke="#1a3d12" stroke-width="1.2"/>
<line x1="558.34" y1="424.20" x2="558.34" y2="480.50" stroke="#585858" stroke-width="1.2"/>
<rect x="555.19" y="432.70" width="6.3" height="40.70" fill="#8ff85c" stroke="#1f3f18" stroke-width="1.1"/>
<rect x="552.04" y="436.20" width="12.6" height="30.70" fill="#8ff85c" stroke="#1f3f18" stroke-width="1.1"/>
<line x1="552.04" y1="456.60" x2="564.64" y2="456.60" stroke="#1a3d12" stroke-width="1.2"/>
<line x1="589.50" y1="431.80" x2="589.50" y2="487.90" stroke="#585858" stroke-width="1.2"/>
<rect x="586.36" y="449.50" width="6.3" height="30.10" fill="#8ff85c" stroke="#1f3f18" stroke-width="1.1"/>
<rect x="583.21" y="458.40" width="12.6" height="15.00" fill="#8ff85c" stroke="#1f3f18" stroke-width="1.1"/>
<line x1="583.21" y1="467.20" x2="595.80" y2="467.20" stroke="#1a3d12" stroke-width="1.2"/>
<line x1="620.67" y1="429.50" x2="620.67" y2="481.90" stroke="#585858" stroke-width="1.2"/>
<rect x="617.52" y="440.60" width="6.3" height="34.90" fill="#8ff85c" stroke="#1f3f18" stroke-width="1.1"/>
<rect x="614.37" y="443.70" width="12.6" height="25.30" fill="#8ff85c" stroke="#1f3f18" stroke-width="1.1"/>
<line x1="614.37" y1="450.00" x2="626.97" y2="450.00" stroke="#1a3d12" stroke-width="1.2"/>
<line x1="651.84" y1="419.40" x2="651.84" y2="468.10" stroke="#585858" stroke-width="1.2"/>
<rect x="648.69" y="424.20" width="6.3" height="35.00" fill="#8ff85c" stroke="#1f3f18" stroke-width="1.1"/>
<rect x="645.54" y="429.70" width="12.6" height="18.60" fill="#8ff85c" stroke="#1f3f18" stroke-width="1.1"/>
<line x1="645.54" y1="436.20" x2="658.13" y2="436.20" stroke="#1a3d12" stroke-width="1.2"/>
<line x1="683.00" y1="409.30" x2="683.00" y2="478.70" stroke="#585858" stroke-width="1.2"/>
<rect x="679.85" y="427.70" width="6.3" height="44.80" fill="#8ff85c" stroke="#1f3f18" stroke-width="1.1"/>
<rect x="676.70" y="436.20" width="12.6" height="30.50" fill="#8ff85c" stroke="#1f3f18" stroke-width="1.1"/>
<line x1="676.70" y1="450.40" x2="689.30" y2="450.40" stroke="#1a3d12" stroke-width="1.2"/>
<line x1="714.17" y1="408.40" x2="714.17" y2="472.50" stroke="#585858" stroke-width="1.2"/>
<rect x="711.02" y="417.60" width="6.3" height="32.80" fill="#8ff85c" stroke="#1f3f18" stroke-width="1.1"/>
<rect x="707.87" y="422.00" width="12.6" height="19.50" fill="#8ff85c" stroke="#1f3f18" stroke-width="1.1"/>
<line x1="707.87" y1="427.70" x2="720.47" y2="427.70" stroke="#1a3d12" stroke-width="1.2"/>
<line x1="745.33" y1="417.60" x2="745.33" y2="487.20" stroke="#585858" stroke-width="1.2"/>
<rect x="742.18" y="427.40" width="6.3" height="44.60" fill="#8ff85c" stroke="#1f3f18" stroke-width="1.1"/>
<rect x="739.03" y="435.90" width="12.6" height="28.70" fill="#8ff85c" stroke="#1f3f18" stroke-width="1.1"/>
<line x1="739.03" y1="453.00" x2="751.63" y2="453.00" stroke="#1a3d12" stroke-width="1.2"/>
<line x1="776.50" y1="412.30" x2="776.50" y2="475.50" stroke="#585858" stroke-width="1.2"/>
<rect x="773.35" y="420.60" width="6.3" height="51.00" fill="#8ff85c" stroke="#1f3f18" stroke-width="1.1"/>
<rect x="770.20" y="430.50" width="12.6" height="28.70" fill="#8ff85c" stroke="#1f3f18" stroke-width="1.1"/>
<line x1="770.20" y1="452.50" x2="782.79" y2="452.50" stroke="#1a3d12" stroke-width="1.2"/>
<line x1="807.66" y1="417.60" x2="807.66" y2="467.60" stroke="#585858" stroke-width="1.2"/>
<rect x="804.51" y="426.50" width="6.3" height="41.10" fill="#8ff85c" stroke="#1f3f18" stroke-width="1.1"/>
<rect x="801.36" y="434.80" width="12.6" height="27.60" fill="#8ff85c" stroke="#1f3f18" stroke-width="1.1"/>
<line x1="801.36" y1="449.50" x2="813.96" y2="449.50" stroke="#1a3d12" stroke-width="1.2"/>
<polyline points="59.70,460.50 90.87,437.60 122.03,419.40 153.19,414.10 184.36,412.30 215.52,446.00 246.69,428.80 277.86,427.70 309.02,414.10 340.19,452.20 371.35,441.90 402.51,411.40 433.68,402.60 464.84,437.10 496.01,437.60 527.17,458.40 558.34,456.10 589.50,477.00 620.67,446.00 651.84,425.60 683.00,430.90 714.17,422.90 745.33,457.80 776.50,459.60 807.66,459.60" fill="none" stroke="#d02c2c" stroke-width="1.5" stroke-linejoin="round"/>
<polyline points="59.70,460.50 90.87,438.00 122.03,416.40 153.19,413.20 184.36,410.50 215.52,446.80 246.69,431.80 277.86,428.20 309.02,415.90 340.19,449.50 371.35,440.10 402.51,420.30 433.68,415.90 464.84,443.00 496.01,443.00 527.17,453.00 558.34,452.70 589.50,464.90 620.67,456.60 651.84,439.40 683.00,449.50 714.17,432.30 745.33,450.70 776.50,446.50 807.66,448.60" fill="none" stroke="#1c1ca8" stroke-width="1.5" stroke-linejoin="round"/>
<rect x="44.4" y="378.0" width="779.20" height="115.1" fill="none" stroke="#000" stroke-width="1.3"/>
<line x1="39.80" y1="492.90" x2="44.4" y2="492.90" stroke="#000" stroke-width="1.2"/>
<text x="19.09" y="497.20" font-size="10.67" fill="#000" stroke="#000" stroke-width="0.18" textLength="16.21" lengthAdjust="spacingAndGlyphs">0.0</text>
<line x1="39.80" y1="467.35" x2="44.4" y2="467.35" stroke="#000" stroke-width="1.2"/>
<text x="19.09" y="471.65" font-size="10.67" fill="#000" stroke="#000" stroke-width="0.18" textLength="16.21" lengthAdjust="spacingAndGlyphs">2.5</text>
<line x1="39.80" y1="441.80" x2="44.4" y2="441.80" stroke="#000" stroke-width="1.2"/>
<text x="19.09" y="446.10" font-size="10.67" fill="#000" stroke="#000" stroke-width="0.18" textLength="16.21" lengthAdjust="spacingAndGlyphs">5.0</text>
<line x1="39.80" y1="416.25" x2="44.4" y2="416.25" stroke="#000" stroke-width="1.2"/>
<text x="19.09" y="420.55" font-size="10.67" fill="#000" stroke="#000" stroke-width="0.18" textLength="16.21" lengthAdjust="spacingAndGlyphs">7.5</text>
<line x1="39.80" y1="390.70" x2="44.4" y2="390.70" stroke="#000" stroke-width="1.2"/>
<text x="12.61" y="395.00" font-size="10.67" fill="#000" stroke="#000" stroke-width="0.18" textLength="22.69" lengthAdjust="spacingAndGlyphs">10.0</text>
<line x1="59.70" y1="493.1" x2="59.70" y2="497.70" stroke="#000" stroke-width="1.2"/>
<line x1="184.36" y1="493.1" x2="184.36" y2="497.70" stroke="#000" stroke-width="1.2"/>
<line x1="309.02" y1="493.1" x2="309.02" y2="497.70" stroke="#000" stroke-width="1.2"/>
<line x1="433.68" y1="493.1" x2="433.68" y2="497.70" stroke="#000" stroke-width="1.2"/>
<line x1="558.34" y1="493.1" x2="558.34" y2="497.70" stroke="#000" stroke-width="1.2"/>
<line x1="683.00" y1="493.1" x2="683.00" y2="497.70" stroke="#000" stroke-width="1.2"/>
<line x1="807.66" y1="493.1" x2="807.66" y2="497.70" stroke="#000" stroke-width="1.2"/>
<text x="45.10" y="373.40" font-size="12.3" fill="#000" stroke="#000" stroke-width="0.18" textLength="27.18" lengthAdjust="spacingAndGlyphs">10m</text>
<text x="76.13" y="373.40" font-size="12.3" fill="#000" stroke="#000" stroke-width="0.18" textLength="28.61" lengthAdjust="spacingAndGlyphs">wind</text>
<text x="108.58" y="373.40" font-size="12.3" fill="#000" stroke="#000" stroke-width="0.18" textLength="36.55" lengthAdjust="spacingAndGlyphs">speed</text>
<text x="148.98" y="373.40" font-size="12.3" fill="#000" stroke="#000" stroke-width="0.18" textLength="31.61" lengthAdjust="spacingAndGlyphs">(m/s)</text>
<line x1="44.4" y1="617.40" x2="823.6" y2="617.40" stroke="#e2e2e2" stroke-width="0.8" stroke-dasharray="2.8 1.3"/>
<line x1="44.4" y1="587.46" x2="823.6" y2="587.46" stroke="#e2e2e2" stroke-width="0.8" stroke-dasharray="2.8 1.3"/>
<line x1="44.4" y1="557.53" x2="823.6" y2="557.53" stroke="#e2e2e2" stroke-width="0.8" stroke-dasharray="2.8 1.3"/>
<line x1="44.4" y1="527.60" x2="823.6" y2="527.60" stroke="#e2e2e2" stroke-width="0.8" stroke-dasharray="2.8 1.3"/>
<line x1="59.70" y1="519.7" x2="59.70" y2="634.8000000000001" stroke="#e2e2e2" stroke-width="0.8" stroke-dasharray="2.8 1.3"/>
<line x1="184.36" y1="519.7" x2="184.36" y2="634.8000000000001" stroke="#e2e2e2" stroke-width="0.8" stroke-dasharray="2.8 1.3"/>
<line x1="309.02" y1="519.7" x2="309.02" y2="634.8000000000001" stroke="#e2e2e2" stroke-width="0.8" stroke-dasharray="2.8 1.3"/>
<line x1="433.68" y1="519.7" x2="433.68" y2="634.8000000000001" stroke="#e2e2e2" stroke-width="0.8" stroke-dasharray="2.8 1.3"/>
<line x1="558.34" y1="519.7" x2="558.34" y2="634.8000000000001" stroke="#e2e2e2" stroke-width="0.8" stroke-dasharray="2.8 1.3"/>
<line x1="683.00" y1="519.7" x2="683.00" y2="634.8000000000001" stroke="#e2e2e2" stroke-width="0.8" stroke-dasharray="2.8 1.3"/>
<line x1="807.66" y1="519.7" x2="807.66" y2="634.8000000000001" stroke="#e2e2e2" stroke-width="0.8" stroke-dasharray="2.8 1.3"/>
<line x1="59.70" y1="580.30" x2="59.70" y2="580.30" stroke="#585858" stroke-width="1.2"/>
<rect x="56.55" y="580.30" width="6.3" height="0.00" fill="#8ff85c" stroke="#1f3f18" stroke-width="1.1"/>
<rect x="53.40" y="580.30" width="12.6" height="0.00" fill="#8ff85c" stroke="#1f3f18" stroke-width="1.1"/>
<line x1="53.40" y1="580.30" x2="66.00" y2="580.30" stroke="#1a3d12" stroke-width="1.2"/>
<line x1="90.87" y1="596.80" x2="90.87" y2="601.20" stroke="#585858" stroke-width="1.2"/>
<rect x="87.72" y="597.50" width="6.3" height="3.10" fill="#8ff85c" stroke="#1f3f18" stroke-width="1.1"/>
<rect x="84.57" y="598.00" width="12.6" height="2.30" fill="#8ff85c" stroke="#1f3f18" stroke-width="1.1"/>
<line x1="84.57" y1="599.10" x2="97.17" y2="599.10" stroke="#1a3d12" stroke-width="1.2"/>
<line x1="122.03" y1="608.70" x2="122.03" y2="612.70" stroke="#585858" stroke-width="1.2"/>
<rect x="118.88" y="609.00" width="6.3" height="3.00" fill="#8ff85c" stroke="#1f3f18" stroke-width="1.1"/>
<rect x="115.73" y="609.20" width="12.6" height="2.60" fill="#8ff85c" stroke="#1f3f18" stroke-width="1.1"/>
<line x1="115.73" y1="610.40" x2="128.33" y2="610.40" stroke="#1a3d12" stroke-width="1.2"/>
<line x1="153.19" y1="607.40" x2="153.19" y2="613.30" stroke="#585858" stroke-width="1.2"/>
<rect x="150.04" y="608.20" width="6.3" height="4.30" fill="#8ff85c" stroke="#1f3f18" stroke-width="1.1"/>
<rect x="146.89" y="608.70" width="12.6" height="3.50" fill="#8ff85c" stroke="#1f3f18" stroke-width="1.1"/>
<line x1="146.89" y1="610.40" x2="159.50" y2="610.40" stroke="#1a3d12" stroke-width="1.2"/>
<line x1="184.36" y1="597.70" x2="184.36" y2="606.00" stroke="#585858" stroke-width="1.2"/>
<rect x="181.21" y="598.70" width="6.3" height="3.80" fill="#8ff85c" stroke="#1f3f18" stroke-width="1.1"/>
<rect x="178.06" y="599.10" width="12.6" height="3.00" fill="#8ff85c" stroke="#1f3f18" stroke-width="1.1"/>
<line x1="178.06" y1="600.40" x2="190.66" y2="600.40" stroke="#1a3d12" stroke-width="1.2"/>
<line x1="215.52" y1="616.30" x2="215.52" y2="619.80" stroke="#585858" stroke-width="1.2"/>
<rect x="212.37" y="616.20" width="6.3" height="2.30" fill="#8ff85c" stroke="#1f3f18" stroke-width="1.1"/>
<rect x="209.22" y="616.60" width="12.6" height="1.40" fill="#8ff85c" stroke="#1f3f18" stroke-width="1.1"/>
<line x1="209.22" y1="617.20" x2="221.82" y2="617.20" stroke="#1a3d12" stroke-width="1.2"/>
<line x1="246.69" y1="619.30" x2="246.69" y2="624.30" stroke="#585858" stroke-width="1.2"/>
<rect x="243.54" y="620.00" width="6.3" height="3.20" fill="#8ff85c" stroke="#1f3f18" stroke-width="1.1"/>
<rect x="240.39" y="620.40" width="12.6" height="2.50" fill="#8ff85c" stroke="#1f3f18" stroke-width="1.1"/>
<line x1="240.39" y1="621.60" x2="252.99" y2="621.60" stroke="#1a3d12" stroke-width="1.2"/>
<line x1="277.86" y1="599.80" x2="277.86" y2="606.60" stroke="#585858" stroke-width="1.2"/>
<rect x="274.71" y="600.50" width="6.3" height="5.50" fill="#8ff85c" stroke="#1f3f18" stroke-width="1.1"/>
<rect x="271.56" y="601.20" width="12.6" height="4.50" fill="#8ff85c" stroke="#1f3f18" stroke-width="1.1"/>
<line x1="271.56" y1="603.40" x2="284.16" y2="603.40" stroke="#1a3d12" stroke-width="1.2"/>
<line x1="309.02" y1="595.60" x2="309.02" y2="601.20" stroke="#585858" stroke-width="1.2"/>
<rect x="305.87" y="596.30" width="6.3" height="3.90" fill="#8ff85c" stroke="#1f3f18" stroke-width="1.1"/>
<rect x="302.72" y="596.80" width="12.6" height="3.00" fill="#8ff85c" stroke="#1f3f18" stroke-width="1.1"/>
<line x1="302.72" y1="598.20" x2="315.32" y2="598.20" stroke="#1a3d12" stroke-width="1.2"/>
<line x1="340.19" y1="613.60" x2="340.19" y2="620.40" stroke="#585858" stroke-width="1.2"/>
<rect x="337.04" y="614.80" width="6.3" height="4.70" fill="#8ff85c" stroke="#1f3f18" stroke-width="1.1"/>
<rect x="333.88" y="615.40" width="12.6" height="3.60" fill="#8ff85c" stroke="#1f3f18" stroke-width="1.1"/>
<line x1="333.88" y1="617.20" x2="346.49" y2="617.20" stroke="#1a3d12" stroke-width="1.2"/>
<line x1="371.35" y1="611.00" x2="371.35" y2="628.70" stroke="#585858" stroke-width="1.2"/>
<rect x="368.20" y="614.20" width="6.3" height="12.20" fill="#8ff85c" stroke="#1f3f18" stroke-width="1.1"/>
<rect x="365.05" y="618.10" width="12.6" height="7.10" fill="#8ff85c" stroke="#1f3f18" stroke-width="1.1"/>
<line x1="365.05" y1="620.70" x2="377.65" y2="620.70" stroke="#1a3d12" stroke-width="1.2"/>
<line x1="402.51" y1="596.80" x2="402.51" y2="605.10" stroke="#585858" stroke-width="1.2"/>
<rect x="399.37" y="598.00" width="6.3" height="5.50" fill="#8ff85c" stroke="#1f3f18" stroke-width="1.1"/>
<rect x="396.21" y="598.60" width="12.6" height="4.40" fill="#8ff85c" stroke="#1f3f18" stroke-width="1.1"/>
<line x1="396.21" y1="600.40" x2="408.81" y2="600.40" stroke="#1a3d12" stroke-width="1.2"/>
<line x1="433.68" y1="588.80" x2="433.68" y2="605.70" stroke="#585858" stroke-width="1.2"/>
<rect x="430.53" y="590.60" width="6.3" height="10.60" fill="#8ff85c" stroke="#1f3f18" stroke-width="1.1"/>
<rect x="427.38" y="593.30" width="12.6" height="4.40" fill="#8ff85c" stroke="#1f3f18" stroke-width="1.1"/>
<line x1="427.38" y1="595.00" x2="439.98" y2="595.00" stroke="#1a3d12" stroke-width="1.2"/>
<line x1="464.84" y1="607.40" x2="464.84" y2="615.80" stroke="#585858" stroke-width="1.2"/>
<rect x="461.69" y="611.50" width="6.3" height="4.00" fill="#8ff85c" stroke="#1f3f18" stroke-width="1.1"/>
<rect x="458.54" y="611.90" width="12.6" height="3.20" fill="#8ff85c" stroke="#1f3f18" stroke-width="1.1"/>
<line x1="458.54" y1="613.60" x2="471.14" y2="613.60" stroke="#1a3d12" stroke-width="1.2"/>
<line x1="496.01" y1="611.00" x2="496.01" y2="626.90" stroke="#585858" stroke-width="1.2"/>
<rect x="492.86" y="615.40" width="6.3" height="8.00" fill="#8ff85c" stroke="#1f3f18" stroke-width="1.1"/>
<rect x="489.71" y="617.50" width="12.6" height="4.10" fill="#8ff85c" stroke="#1f3f18" stroke-width="1.1"/>
<line x1="489.71" y1="619.80" x2="502.31" y2="619.80" stroke="#1a3d12" stroke-width="1.2"/>
<line x1="527.17" y1="588.00" x2="527.17" y2="603.40" stroke="#585858" stroke-width="1.2"/>
<rect x="524.02" y="592.40" width="6.3" height="8.60" fill="#8ff85c" stroke="#1f3f18" stroke-width="1.1"/>
<rect x="520.88" y="595.00" width="12.6" height="4.80" fill="#8ff85c" stroke="#1f3f18" stroke-width="1.1"/>
<line x1="520.88" y1="597.70" x2="533.47" y2="597.70" stroke="#1a3d12" stroke-width="1.2"/>
<line x1="558.34" y1="559.60" x2="558.34" y2="600.90" stroke="#585858" stroke-width="1.2"/>
<rect x="555.19" y="567.60" width="6.3" height="23.90" fill="#8ff85c" stroke="#1f3f18" stroke-width="1.1"/>
<rect x="552.04" y="578.60" width="12.6" height="10.20" fill="#8ff85c" stroke="#1f3f18" stroke-width="1.1"/>
<line x1="552.04" y1="585.30" x2="564.64" y2="585.30" stroke="#1a3d12" stroke-width="1.2"/>
<line x1="589.50" y1="579.10" x2="589.50" y2="618.60" stroke="#585858" stroke-width="1.2"/>
<rect x="586.36" y="581.40" width="6.3" height="29.90" fill="#8ff85c" stroke="#1f3f18" stroke-width="1.1"/>
<rect x="583.21" y="587.60" width="12.6" height="21.10" fill="#8ff85c" stroke="#1f3f18" stroke-width="1.1"/>
<line x1="583.21" y1="602.10" x2="595.80" y2="602.10" stroke="#1a3d12" stroke-width="1.2"/>
<line x1="620.67" y1="590.30" x2="620.67" y2="630.00" stroke="#585858" stroke-width="1.2"/>
<rect x="617.52" y="593.80" width="6.3" height="24.80" fill="#8ff85c" stroke="#1f3f18" stroke-width="1.1"/>
<rect x="614.37" y="596.30" width="12.6" height="17.00" fill="#8ff85c" stroke="#1f3f18" stroke-width="1.1"/>
<line x1="614.37" y1="603.40" x2="626.97" y2="603.40" stroke="#1a3d12" stroke-width="1.2"/>
<line x1="651.84" y1="560.50" x2="651.84" y2="599.50" stroke="#585858" stroke-width="1.2"/>
<rect x="648.69" y="562.30" width="6.3" height="19.80" fill="#8ff85c" stroke="#1f3f18" stroke-width="1.1"/>
<rect x="645.54" y="566.20" width="12.6" height="13.80" fill="#8ff85c" stroke="#1f3f18" stroke-width="1.1"/>
<line x1="645.54" y1="572.90" x2="658.13" y2="572.90" stroke="#1a3d12" stroke-width="1.2"/>
<line x1="683.00" y1="524.20" x2="683.00" y2="574.70" stroke="#585858" stroke-width="1.2"/>
<rect x="679.85" y="529.00" width="6.3" height="34.70" fill="#8ff85c" stroke="#1f3f18" stroke-width="1.1"/>
<rect x="676.70" y="534.30" width="12.6" height="26.20" fill="#8ff85c" stroke="#1f3f18" stroke-width="1.1"/>
<line x1="676.70" y1="542.40" x2="689.30" y2="542.40" stroke="#1a3d12" stroke-width="1.2"/>
<line x1="714.17" y1="554.00" x2="714.17" y2="580.90" stroke="#585858" stroke-width="1.2"/>
<rect x="711.02" y="556.60" width="6.3" height="20.70" fill="#8ff85c" stroke="#1f3f18" stroke-width="1.1"/>
<rect x="707.87" y="560.20" width="12.6" height="15.90" fill="#8ff85c" stroke="#1f3f18" stroke-width="1.1"/>
<line x1="707.87" y1="565.80" x2="720.47" y2="565.80" stroke="#1a3d12" stroke-width="1.2"/>
<line x1="745.33" y1="574.70" x2="745.33" y2="596.80" stroke="#585858" stroke-width="1.2"/>
<rect x="742.18" y="577.00" width="6.3" height="17.50" fill="#8ff85c" stroke="#1f3f18" stroke-width="1.1"/>
<rect x="739.03" y="580.00" width="12.6" height="11.50" fill="#8ff85c" stroke="#1f3f18" stroke-width="1.1"/>
<line x1="739.03" y1="584.40" x2="751.63" y2="584.40" stroke="#1a3d12" stroke-width="1.2"/>
<line x1="776.50" y1="543.70" x2="776.50" y2="586.20" stroke="#585858" stroke-width="1.2"/>
<rect x="773.35" y="550.80" width="6.3" height="21.20" fill="#8ff85c" stroke="#1f3f18" stroke-width="1.1"/>
<rect x="770.20" y="556.10" width="12.6" height="7.10" fill="#8ff85c" stroke="#1f3f18" stroke-width="1.1"/>
<line x1="770.20" y1="558.70" x2="782.79" y2="558.70" stroke="#1a3d12" stroke-width="1.2"/>
<line x1="807.66" y1="525.10" x2="807.66" y2="579.60" stroke="#585858" stroke-width="1.2"/>
<rect x="804.51" y="526.00" width="6.3" height="43.70" fill="#8ff85c" stroke="#1f3f18" stroke-width="1.1"/>
<rect x="801.36" y="533.60" width="12.6" height="26.00" fill="#8ff85c" stroke="#1f3f18" stroke-width="1.1"/>
<line x1="801.36" y1="545.40" x2="813.96" y2="545.40" stroke="#1a3d12" stroke-width="1.2"/>
<polyline points="59.70,580.30 90.87,599.10 122.03,610.40 153.19,610.40 184.36,601.20 215.52,617.20 246.69,620.70 277.86,603.90 309.02,598.60 340.19,617.20 371.35,618.60 402.51,599.80 433.68,594.20 464.84,610.10 496.01,618.10 527.17,597.30 558.34,585.70 589.50,599.80 620.67,596.80 651.84,570.20 683.00,538.90 714.17,563.20 745.33,583.20 776.50,555.20 807.66,548.10" fill="none" stroke="#d02c2c" stroke-width="1.5" stroke-linejoin="round"/>
<polyline points="59.70,580.30 90.87,599.10 122.03,610.40 153.19,610.40 184.36,601.20 215.52,617.20 246.69,620.70 277.86,603.90 309.02,598.60 340.19,617.20 371.35,619.30 402.51,599.80 433.68,595.00 464.84,612.80 496.01,618.10 527.17,597.30 558.34,583.20 589.50,599.50 620.67,604.80 651.84,575.60 683.00,545.50 714.17,564.00 745.33,583.90 776.50,557.80 807.66,547.80" fill="none" stroke="#1c1ca8" stroke-width="1.5" stroke-linejoin="round"/>
<rect x="44.4" y="519.7" width="779.20" height="115.1" fill="none" stroke="#000" stroke-width="1.3"/>
<line x1="39.80" y1="617.40" x2="44.4" y2="617.40" stroke="#000" stroke-width="1.2"/>
<text x="22.33" y="621.70" font-size="10.67" fill="#000" stroke="#000" stroke-width="0.18" textLength="12.97" lengthAdjust="spacingAndGlyphs">10</text>
<line x1="39.80" y1="587.46" x2="44.4" y2="587.46" stroke="#000" stroke-width="1.2"/>
<text x="22.33" y="591.76" font-size="10.67" fill="#000" stroke="#000" stroke-width="0.18" textLength="12.97" lengthAdjust="spacingAndGlyphs">15</text>
<line x1="39.80" y1="557.53" x2="44.4" y2="557.53" stroke="#000" stroke-width="1.2"/>
<text x="22.33" y="561.83" font-size="10.67" fill="#000" stroke="#000" stroke-width="0.18" textLength="12.97" lengthAdjust="spacingAndGlyphs">20</text>
<line x1="39.80" y1="527.60" x2="44.4" y2="527.60" stroke="#000" stroke-width="1.2"/>
<text x="22.33" y="531.89" font-size="10.67" fill="#000" stroke="#000" stroke-width="0.18" textLength="12.97" lengthAdjust="spacingAndGlyphs">25</text>
<line x1="59.70" y1="634.8000000000001" x2="59.70" y2="639.40" stroke="#000" stroke-width="1.2"/>
<line x1="184.36" y1="634.8000000000001" x2="184.36" y2="639.40" stroke="#000" stroke-width="1.2"/>
<line x1="309.02" y1="634.8000000000001" x2="309.02" y2="639.40" stroke="#000" stroke-width="1.2"/>
<line x1="433.68" y1="634.8000000000001" x2="433.68" y2="639.40" stroke="#000" stroke-width="1.2"/>
<line x1="558.34" y1="634.8000000000001" x2="558.34" y2="639.40" stroke="#000" stroke-width="1.2"/>
<line x1="683.00" y1="634.8000000000001" x2="683.00" y2="639.40" stroke="#000" stroke-width="1.2"/>
<line x1="807.66" y1="634.8000000000001" x2="807.66" y2="639.40" stroke="#000" stroke-width="1.2"/>
<text x="45.10" y="515.10" font-size="12.3" fill="#000" stroke="#000" stroke-width="0.18" textLength="19.49" lengthAdjust="spacingAndGlyphs">2m</text>
<text x="68.43" y="515.10" font-size="12.3" fill="#000" stroke="#000" stroke-width="0.18" textLength="76.06" lengthAdjust="spacingAndGlyphs">temperature</text>
<text x="148.33" y="515.10" font-size="12.3" fill="#000" stroke="#000" stroke-width="0.18" textLength="23.94" lengthAdjust="spacingAndGlyphs">(°C)</text>
<text x="49.73" y="652.80" font-size="10.67" fill="#000" stroke="#000" stroke-width="0.18" textLength="19.95" lengthAdjust="spacingAndGlyphs">12Z</text>
<text x="44.40" y="664.80" font-size="10.67" fill="#000" stroke="#000" stroke-width="0.18" textLength="30.59" lengthAdjust="spacingAndGlyphs">13Apr</text>
<text x="174.39" y="652.80" font-size="10.67" fill="#000" stroke="#000" stroke-width="0.18" textLength="19.95" lengthAdjust="spacingAndGlyphs">12Z</text>
<text x="169.06" y="664.80" font-size="10.67" fill="#000" stroke="#000" stroke-width="0.18" textLength="30.59" lengthAdjust="spacingAndGlyphs">14Apr</text>
<text x="299.05" y="652.80" font-size="10.67" fill="#000" stroke="#000" stroke-width="0.18" textLength="19.95" lengthAdjust="spacingAndGlyphs">12Z</text>
<text x="293.72" y="664.80" font-size="10.67" fill="#000" stroke="#000" stroke-width="0.18" textLength="30.59" lengthAdjust="spacingAndGlyphs">15Apr</text>
<text x="423.71" y="652.80" font-size="10.67" fill="#000" stroke="#000" stroke-width="0.18" textLength="19.95" lengthAdjust="spacingAndGlyphs">12Z</text>
<text x="418.38" y="664.80" font-size="10.67" fill="#000" stroke="#000" stroke-width="0.18" textLength="30.59" lengthAdjust="spacingAndGlyphs">16Apr</text>
<text x="548.37" y="652.80" font-size="10.67" fill="#000" stroke="#000" stroke-width="0.18" textLength="19.95" lengthAdjust="spacingAndGlyphs">12Z</text>
<text x="543.04" y="664.80" font-size="10.67" fill="#000" stroke="#000" stroke-width="0.18" textLength="30.59" lengthAdjust="spacingAndGlyphs">17Apr</text>
<text x="673.03" y="652.80" font-size="10.67" fill="#000" stroke="#000" stroke-width="0.18" textLength="19.95" lengthAdjust="spacingAndGlyphs">12Z</text>
<text x="667.70" y="664.80" font-size="10.67" fill="#000" stroke="#000" stroke-width="0.18" textLength="30.59" lengthAdjust="spacingAndGlyphs">18Apr</text>
<text x="797.69" y="652.80" font-size="10.67" fill="#000" stroke="#000" stroke-width="0.18" textLength="19.95" lengthAdjust="spacingAndGlyphs">12Z</text>
<text x="792.36" y="664.80" font-size="10.67" fill="#000" stroke="#000" stroke-width="0.18" textLength="30.59" lengthAdjust="spacingAndGlyphs">19Apr</text>
</g></svg></body></html>
